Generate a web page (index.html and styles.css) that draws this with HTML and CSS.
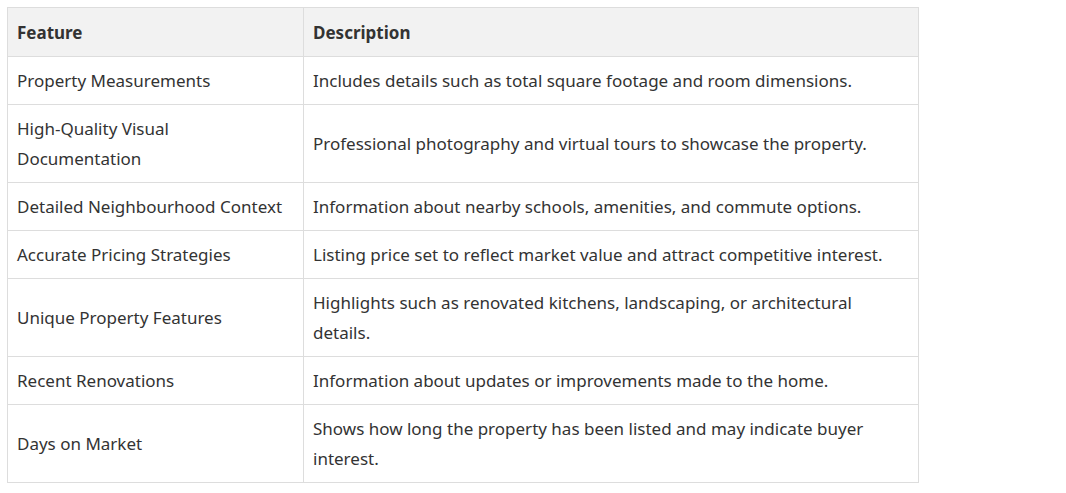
FILE: index.html
```html
<!DOCTYPE html>
<html>
<head>
<meta charset="utf-8">
<link rel="stylesheet" href="styles.css">
</head>
<body>
<table class="features">
  <thead>
    <tr><th class="col-feature">Feature</th><th>Description</th></tr>
  </thead>
  <tbody>
    <tr><td>Property Measurements</td><td>Includes details such as total square footage and room dimensions.</td></tr>
    <tr><td>High-Quality Visual Documentation</td><td>Professional photography and virtual tours to showcase the property.</td></tr>
    <tr><td>Detailed Neighbourhood Context</td><td>Information about nearby schools, amenities, and commute options.</td></tr>
    <tr><td>Accurate Pricing Strategies</td><td>Listing price set to reflect market value and attract competitive interest.</td></tr>
    <tr><td>Unique Property Features</td><td>Highlights such as renovated kitchens, landscaping, or architectural details.</td></tr>
    <tr><td>Recent Renovations</td><td>Information about updates or improvements made to the home.</td></tr>
    <tr><td>Days on Market</td><td>Shows how long the property has been listed and may indicate buyer interest.</td></tr>
  </tbody>
</table>
</body>
</html>
```
FILE: styles.css
```css
html, body { background: #fff; }
body {
  margin: 7px;
  font-family: "Noto Sans", "Open Sans", sans-serif;
  font-size: 17px;
  color: #333;
}
.features {
  border-collapse: collapse;
  width: 912px;
  table-layout: fixed;
}
.features th, .features td {
  border: 1px solid #ddd;
  padding: 9px 9px 8px 9px;
  line-height: 30px;
  text-align: left;
  vertical-align: middle;
}
.features th {
  background: #f2f2f2;
  font-weight: 700;
  padding-top: 10px;
  padding-bottom: 8px;
}
.col-feature { width: 277px; }
```
